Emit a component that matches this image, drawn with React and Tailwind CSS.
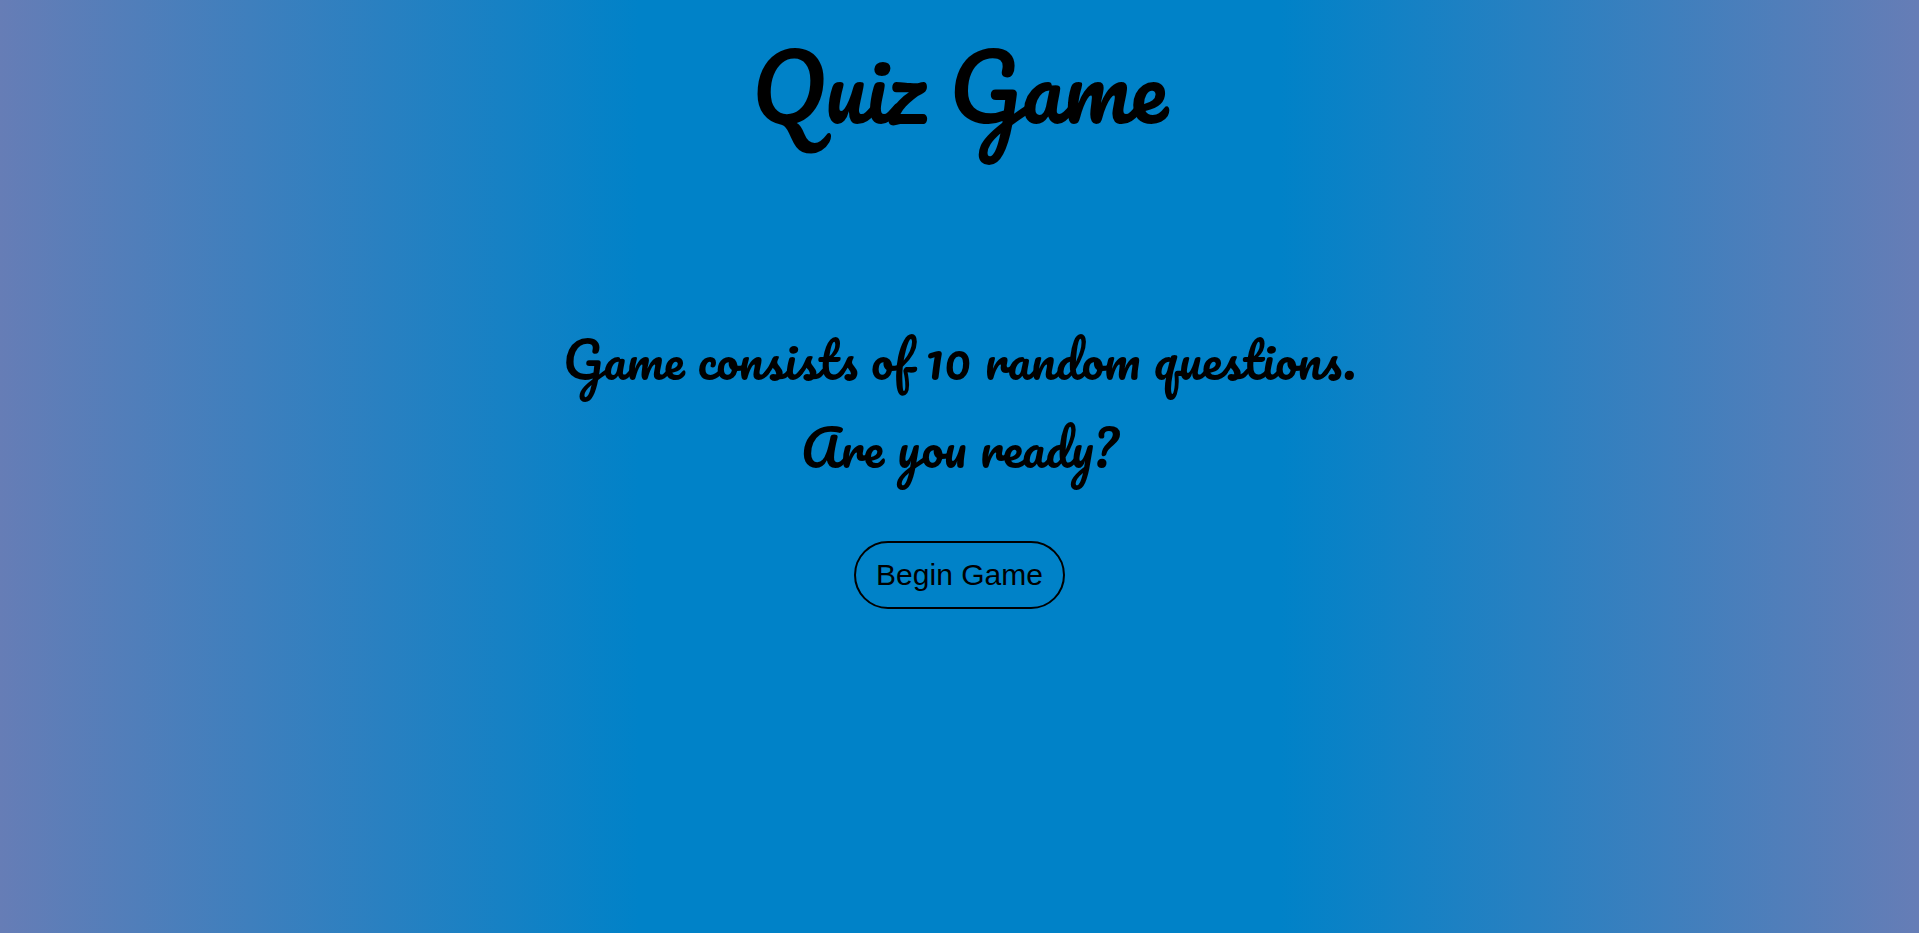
export default function App() {
  return (
    <main className="flex min-h-screen flex-col items-center bg-[linear-gradient(to_left,#667db6,#0082c8,#0082c8,#667db6)] px-4 pt-2 text-center text-black">
      <h1 className="font-[Pacifico,cursive] text-[90px] leading-[156px]">
        Quiz Game
      </h1>
      <section className="mt-[151px] flex flex-col items-center font-[Pacifico,cursive] text-[50px] leading-[88px]">
        <p>Game consists of 10 random questions.</p>
        <p>Are you ready?</p>
      </section>
      <button
        type="button"
        className="mt-[50px] cursor-pointer rounded-full border-2 border-black px-5 py-4 font-['Liberation_Sans',Arial,sans-serif] text-[30px] leading-8"
      >
        Begin Game
      </button>
    </main>
  );
}
